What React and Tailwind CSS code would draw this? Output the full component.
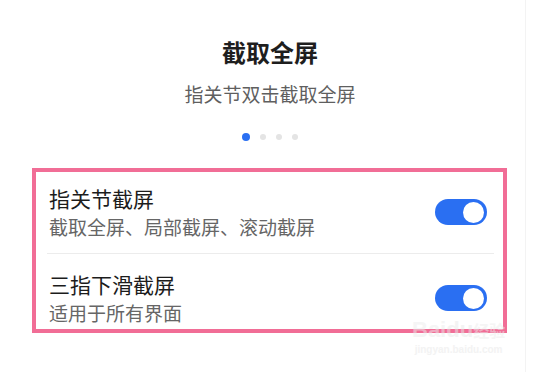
export default function App() {
  const font = { fontFamily: '"Noto Sans CJK SC", "Noto Sans", sans-serif' };
  const Toggle = () => (
    <div className="w-[52px] h-[26px] rounded-full bg-[#2a6ff2] flex items-center justify-end pr-[3px]">
      <div className="w-[21px] h-[21px] rounded-full bg-white" />
    </div>
  );
  return (
    <div className="relative w-[535px] h-[372px] bg-white overflow-hidden" style={font}>
      <div className="w-[526px] h-[372px] border-r border-[#f3f3f3]">
        <div className="pl-[15px] flex flex-col items-center">
          <div className="mt-[36px] text-[24px] leading-[32px] font-bold text-[#1e1e1e]">截取全屏</div>
          <div className="mt-[14px] text-[19px] leading-[24px] text-[#5f5f5f]">指关节双击截取全屏</div>
          <div className="mt-[27px] flex items-center gap-[10px] h-[8px]">
            <div className="w-[8px] h-[8px] rounded-full bg-[#2a6ff2]" />
            <div className="w-[6px] h-[6px] rounded-full bg-[#e4e4e4]" />
            <div className="w-[6px] h-[6px] rounded-full bg-[#e4e4e4]" />
            <div className="w-[6px] h-[6px] rounded-full bg-[#e4e4e4]" />
          </div>
        </div>
        <div className="mt-[27px] ml-[32px] w-[475px] h-[165px] border-4 border-[#f16d96]">
          <div className="flex items-center pl-[13px] pr-[16px] pt-[13px] pb-[14px]">
            <div className="flex-1">
              <div className="text-[21px] leading-[26px] text-[#1c1c1c]">指关节截屏</div>
              <div className="mt-[4px] text-[19px] leading-[24px] text-[#666666]">截取全屏、局部截屏、滚动截屏</div>
            </div>
            <Toggle />
          </div>
          <div className="ml-[11px] mr-[9px] h-px bg-[#ececec]" />
          <div className="flex items-center pl-[13px] pr-[16px] pt-[17px]">
            <div className="flex-1">
              <div className="text-[21px] leading-[26px] text-[#1c1c1c]">三指下滑截屏</div>
              <div className="mt-[4px] text-[19px] leading-[24px] text-[#666666]">适用于所有界面</div>
            </div>
            <Toggle />
          </div>
        </div>
      </div>
      <div className="absolute left-[412px] top-[318px] flex flex-col items-center opacity-50">
        <div className="text-[22px] leading-[24px] font-bold text-[#ececec]" style={{ fontFamily: '"Liberation Sans", sans-serif' }}>
          Bai<span className="text-[#e8e8e8]">du</span><span className="text-[16px]" style={font}>经验</span>
        </div>
        <div className="mt-[2px] text-[10px] leading-[12px] font-bold text-[#e8e8e8]" style={{ fontFamily: '"Liberation Sans", sans-serif' }}>jingyan.baidu.com</div>
      </div>
    </div>
  );
}
